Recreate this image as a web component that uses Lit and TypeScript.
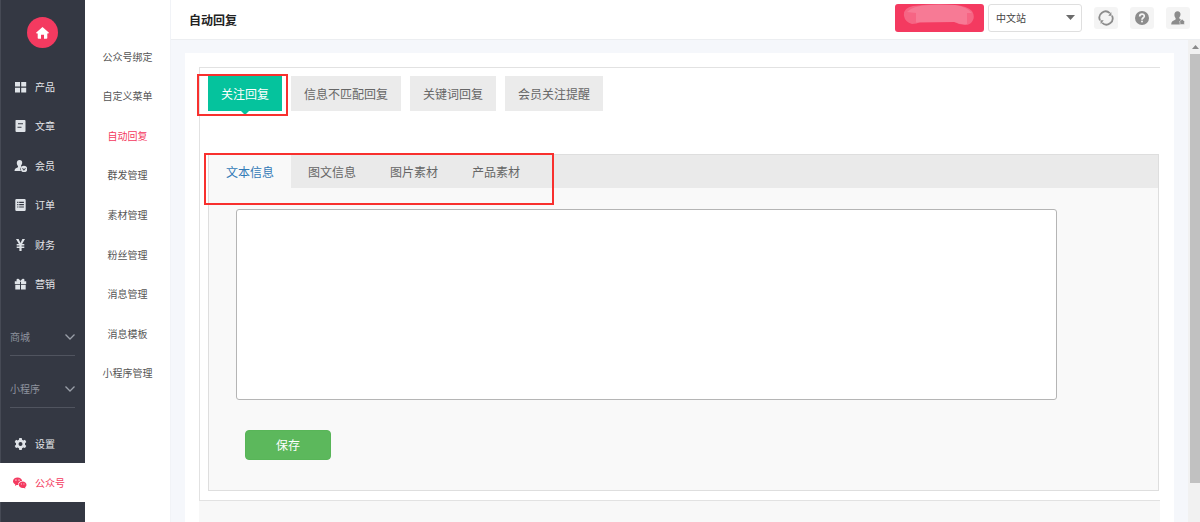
import { LitElement, html, svg, css, TemplateResult } from "lit";
import { customElement, state } from "lit/decorators.js";
import { classMap } from "lit/directives/class-map.js";

const icons: Record<string, TemplateResult> = {
  grid: svg`<path d="M0.5 1h5v4.6h-5zM6.7 1h5v4.6h-5zM0.5 6.8h5v4.6h-5zM6.7 6.8h5v4.6h-5z"/>`,
  article: svg`<path fill-rule="evenodd" d="M1.5 0h8.5q1 0 1 1v10q0 1-1 1H2q-1 0-1-1V.5q0-.5.5-.5zM3.5 3.3v1h5v-1zM3 6.7v1h4v-1z"/>`,
  member: svg`<path d="M5 0c1.800 0 2.900 1.300 2.700 3.100C7.600 4.200 7 5 6.500 5.700c0 .5.300.9.700 1.100A3 3 0 0 0 6.500 11H0c0-2.500 1.600-3 3-3.600.6-.3.700-1 .4-1.500C2.700 5.200 2.300 4 2.300 3 2.300 1.200 3.400 0 5 0z"/><path fill-rule="evenodd" d="M9.500 5.800a3.200 3.200 0 1 1 0 6.400 3.200 3.200 0 0 1 0-6.400zM7.700 8.400l1.700 2.400 1.900-2.400-.7-.4-1.200 1.400-.9-1.400z"/>`,
  order: svg`<path fill-rule="evenodd" d="M2 0h8q1.200 0 1.200 1.200v9.600Q11.200 12 10 12H2Q.8 12 .8 10.800V1.200Q.8 0 2 0zM2.700 2.800v1.100h1.200V2.800zM4.700 2.800v1.100h4.700V2.800zM2.700 5.100v1.100h1.200V5.100zM4.700 5.100v1.100h4.700V5.100zM2.700 7.400v1.100h1.200V7.400zM4.700 7.400v1.100h4.700V7.400z"/>`,
  yen: svg`<path d="M1.500 0h2.600L6 4 7.900 0h2.600L7.600 5h2.200v1.400H7.100v1.200h2.700V9H7.100v3H4.900V9H2.200V7.600h2.700V6.400H2.200V5h2.200z"/>`,
  gift: svg`<path d="M.3 3.200h2C1.300 1.500 2.500.3 3.800.8 4.800 1.200 5.500 2 6 3c.5-1 1.200-1.800 2.200-2.200 1.300-.5 2.500.7 1.500 2.400h2v2.700H6.500V3.700h-1v2.200H.3zM.8 6.700h4.700v4.800H.8zM6.500 6.700h4.700v4.800H6.500z"/>`,
  gear: svg`<path fill-rule="evenodd" d="M4.800 0h2.400l.4 1.700 1.200.7 1.700-.6 1.300 2.100-1.300 1.300v1.500L11.800 8l-1.300 2.100-1.700-.5-1.200.7-.4 1.700H4.800l-.4-1.700-1.200-.7-1.700.5L.2 8l1.300-1.300V5.200L.2 3.900l1.300-2.100 1.700.6 1.200-.7zM6 4a2 2 0 1 0 0 4 2 2 0 0 0 0-4z"/>`,
  wechat: svg`<path fill-rule="evenodd" d="M4.600.6c2.400 0 4.300 1.400 4.500 3.300C6.500 4 4.800 5.700 5.300 8L3.500 8 2 8.900l.3-1.500C.9 6.700 0 5.600 0 4.300 0 2.200 2 .6 4.600.6zM2.900 2.500a.6.600 0 1 0 .1 0zM6 2.500a.6.600 0 1 0 .1 0z"/><path fill-rule="evenodd" d="M9.600 4.600c2.100 0 3.900 1.400 3.900 3.200 0 1-.6 1.900-1.400 2.500l.3 1.300-1.500-.7c-2.900.5-5.100-1.100-5.100-3.100 0-1.800 1.700-3.200 3.800-3.200zM8.300 6.500a.5.500 0 1 0 .1 0zM10.900 6.500a.5.500 0 1 0 .1 0z"/>`,
};

const icon = (name: string) =>
  html`<svg class="icon" viewBox=${name === "wechat" ? "0 0 14 12" : "0 0 12 12"} aria-hidden="true">${icons[name]}</svg>`;

@customElement("app-root")
export class AppRoot extends LitElement {
  @state() private replyTab = 0;
  @state() private materialTab = 0;

  private nav = [
    ["grid", "产品"],
    ["article", "文章"],
    ["member", "会员"],
    ["order", "订单"],
    ["yen", "财务"],
    ["gift", "营销"],
  ];
  private groups = ["商城", "小程序"];
  private sub = ["公众号绑定", "自定义菜单", "自动回复", "群发管理", "素材管理", "粉丝管理", "消息管理", "消息模板", "小程序管理"];
  private replies = ["关注回复", "信息不匹配回复", "关键词回复", "会员关注提醒"];
  private materials = ["文本信息", "图文信息", "图片素材", "产品素材"];

  static styles = css`
    :host {
      display: flex;
      height: 100vh;
      overflow: hidden;
      background: #fff;
      color: #555;
      font: 12px/16px "Noto Sans CJK SC", sans-serif;
    }
    * { box-sizing: border-box; }
    a { color: inherit; text-decoration: none; }
    button, select, textarea { font: inherit; margin: 0; }
    ul { list-style: none; margin: 0; padding: 0; }
    h1 { margin: 0; align-self: center; font-size: 12px; color: #222; }

    .side {
      flex: none;
      width: 85px;
      background: #343843;
      color: #e4e6e9;
      font-size: 10px;
      box-shadow: inset 1px 0 #464a55;
      display: flex;
      flex-direction: column;
    }
    .home {
      display: grid;
      place-items: center;
      align-self: center;
      width: 31px;
      height: 31px;
      margin: 17px 0 19px;
      border-radius: 50%;
      background: #f43a60;
    }
    .home svg { width: 13px; height: 12px; fill: #fff; }
    .nav { display: grid; grid-auto-rows: 1fr; height: 237px; }
    .item { display: flex; align-items: center; gap: 8px; height: 100%; padding-left: 14px; }
    .icon { width: 13px; height: 12px; fill: #dfe3e8; flex: none; }
    .group {
      display: flex;
      align-items: center;
      justify-content: space-between;
      width: 65px;
      height: 52px;
      margin-left: 10px;
      padding: 14px 0 0;
      border: 0;
      border-bottom: 1px solid #50545f;
      background: none;
      color: #8f949f;
    }
    .group svg { width: 10px; height: 6px; fill: none; stroke: #9a9fa9; stroke-width: 1.3; }
    .tail { display: grid; grid-auto-rows: 39px; margin-top: 16px; }
    .current { background: #fff; color: #f43a60; padding-left: 13px; }
    .current .icon { width: 14px; fill: #f43a60; }

    .sub {
      flex: none;
      display: grid;
      grid-auto-rows: 1fr;
      width: 85px;
      height: 356px;
      margin-top: 37px;
      font-size: 10px;
    }
    .sub a { display: grid; place-items: center; height: 100%; }
    .sub .on { color: #f43a60; }

    .main { flex: 1; min-width: 0; display: flex; flex-direction: column; border-left: 1px solid #f1f3f7; }
    .top {
      flex: none;
      display: flex;
      height: 40px;
      padding: 0 10px 0 18px;
      border-bottom: 1px solid #eceef1;
    }
    .tools { margin-left: auto; display: flex; align-items: center; gap: 12px; height: 36px; }
    .pair { display: flex; gap: 4px; }
    .account { width: 89px; height: 28px; padding: 0; border: 0; border-radius: 3px; background: #f43a60; display: block; }
    .account svg { display: block; width: 89px; height: 28px; }
    .site { position: relative; }
    .site select {
      display: block;
      width: 94px;
      height: 28px;
      padding: 0 7px;
      border: 1px solid #dfdfdf;
      border-radius: 3px;
      background: #fff;
      color: #444;
      font-size: 10px;
      appearance: none;
    }
    .site svg { position: absolute; right: 7px; top: 11px; width: 9px; height: 5px; fill: #6b6b6b; pointer-events: none; }
    .tool { display: grid; place-items: center; width: 24px; height: 22px; padding: 0; border: 0; border-radius: 3px; background: #f4f4f4; }
    .tool svg { width: 16px; height: 16px; fill: #8c8c8c; }

    .view { flex: 1; min-height: 0; display: flex; background: #f5f7fb; }
    .card { flex: 1; min-width: 0; margin: 13px 14px 0; padding: 14px 14px 0; background: #fff; display: flex; flex-direction: column; }
    .panel {
      flex: none;
      padding: 8px 1px 9px 8px;
      border: 1px solid #e2e2e2;
      border-right: 0;
    }
    .foot { flex: 1; background: #f8f8f8; }
    .replies { display: flex; gap: 9px; }
    .reply { height: 35px; padding: 0 13px; border: 0; background: #ebebeb; color: #666; position: relative; }
    .reply.on { background: #05c39d; color: #fff; }
    .reply.on::after {
      content: "";
      position: absolute;
      left: 50%;
      top: 100%;
      margin-left: -4px;
      border: 4px solid transparent;
      border-top-color: #05c39d;
      border-bottom: 0;
    }
    .box { margin-top: 43px; border: 1px solid #dedede; background: #f9f9f9; }
    .materials { display: flex; background: #eaeaea; }
    .material { height: 33px; padding: 0 17px; border: 0; background: none; color: #666; }
    .material.on { background: #f9f9f9; color: #337ab7; }
    .form { padding: 21px 27px 30px; }
    .form textarea {
      display: block;
      width: 100%;
      max-width: 821px;
      height: 191px;
      padding: 8px;
      border: 1px solid #b5b5b5;
      border-radius: 3px;
      background: #fff;
      resize: none;
    }
    .save {
      display: block;
      width: 86px;
      height: 30px;
      margin: 30px 0 0 9px;
      padding: 0;
      border: 1px solid #58b558;
      border-radius: 4px;
      background: #5cb85c;
      color: #fff;
    }
    .mark { position: absolute; border: 2px solid #f8302e; pointer-events: none; z-index: 1; }
    .marked { position: relative; }
    .mark-reply { left: -11px; top: -2px; width: 91px; height: 42px; }
    .mark-material { left: -5px; top: -2px; width: 350px; height: 52px; }

    .bar { flex: none; width: 12px; padding-left: 2px; background: #f1f1f1; display: flex; flex-direction: column; }
    .bar svg { display: block; width: 10px; height: 14px; fill: #8a8a8a; }
    .thumb { height: 89%; background: #c1c1c1; }
  `;

  render() {
    return html`
      <nav class="side" aria-label="主菜单">
        <a class="home" href="#" aria-label="首页">
          <svg viewBox="0 0 13 12"><path d="M6.500 0L13 5.700l-.7.800h-1V11q0 .8-.8.800H8V7.800H5v4H2.500q-.8 0-.8-.8V6.500h-1L0 5.700z" /></svg>
        </a>
        <ul class="nav">
          ${this.nav.map(([name, label]) => html`<li><a class="item" href="#">${icon(name)}${label}</a></li>`)}
        </ul>
        ${this.groups.map(
          (g) => html`<button class="group">${g}<svg viewBox="0 0 10 6" aria-hidden="true"><path d="M.5.500L5 5 9.500.500" /></svg></button>`
        )}
        <ul class="tail">
          <li><a class="item" href="#">${icon("gear")}设置</a></li>
          <li><a class="item current" href="#">${icon("wechat")}公众号</a></li>
        </ul>
      </nav>

      <ul class="sub">
        ${this.sub.map((s) => html`<li><a class=${classMap({ on: s === "自动回复" })} href="#">${s}</a></li>`)}
      </ul>

      <main class="main">
        <header class="top">
          <h1>自动回复</h1>
          <div class="tools">
            <div class="pair">
              <button class="account" aria-label="账号">
                <svg viewBox="0 0 89 28">
                  <path fill="#f66584" d="M18 2q22-3 42-1 12 1 17 6 3 5 1 9-2 5-8 5-5 0-11-3H25q-3 2-8 2-7-2-8-8-1-8 9-10z" />
                  <path fill="#f77a95" d="M12 8q5-6 22-7h26q12 2 17 8h-5v11q-6 1-12-2l-39 .5V9z" />
                </svg>
              </button>
              <label class="site">
                <select aria-label="站点"><option>中文站</option></select>
                <svg viewBox="0 0 9 5" aria-hidden="true"><path d="M0 0h9L4.500 5z" /></svg>
              </label>
            </div>
            <button class="tool" aria-label="刷新">
              <svg viewBox="0 0 16 16">
                <g fill="none" stroke="#8c8c8c" stroke-width="1.800">
                  <path d="M2 10.300A6.200 6.200 0 0 1 11.800 3.100" /><path d="M14 5.700A6.200 6.200 0 0 1 4.200 12.900" />
                </g>
                <path d="M10.300 5.800l3.300-.1-.4-3.600zM5.700 10.200l-3.300.1.400 3.600z" />
              </svg>
            </button>
            <button class="tool" aria-label="帮助">
              <svg viewBox="0 0 16 16">
                <circle cx="8" cy="8" r="7" />
                <path fill="none" stroke="#f4f4f4" stroke-width="1.700" d="M5.700 6.400C5.700 3.300 10.400 3.400 10.300 6.200 10.200 7.800 8 7.700 8 9.700" />
                <circle cx="8" cy="11.600" r="1" fill="#f4f4f4" />
              </svg>
            </button>
            <button class="tool" aria-label="用户">
              <svg viewBox="0 0 16 16">
                <path d="M7.500 1.200c2 0 3.200 1.500 3 3.400-.1 1.300-.7 2.200-1.300 3 0 .8.300 1.300 1 1.600l1.800 1-1.500 4.300H1.200c0-3 1.400-3.700 3.500-4.600 1-.4 1.200-1.200.8-2-.7-.8-1.100-2-1.100-3.200 0-2 1.200-3.500 3.100-3.500z" />
                <path d="M12.200 9l2.800 2.900-.6.400v2.300H10v-2.300l-.6-.4z" stroke="#f4f4f4" stroke-width=".6" />
              </svg>
            </button>
          </div>
        </header>

        <div class="view">
          <section class="card">
            <div class="panel">
              <div class="marked">
                <div class="replies" role="tablist">
                  ${this.replies.map(
                    (t, i) => html`<button role="tab" aria-selected=${i === this.replyTab}
                      class=${classMap({ reply: true, on: i === this.replyTab })}
                      @click=${() => (this.replyTab = i)}>${t}</button>`
                  )}
                </div>
                <div class="mark mark-reply"></div>
              </div>
              <div class="box marked">
                <div class="materials" role="tablist">
                  ${this.materials.map(
                    (t, i) => html`<button role="tab" aria-selected=${i === this.materialTab}
                      class=${classMap({ material: true, on: i === this.materialTab })}
                      @click=${() => (this.materialTab = i)}>${t}</button>`
                  )}
                </div>
                <form class="form" @submit=${(e: Event) => e.preventDefault()}>
                  <textarea aria-label="文本信息"></textarea>
                  <button class="save">保存</button>
                </form>
                <div class="mark mark-material"></div>
              </div>
            </div>
            <div class="foot"></div>
          </section>
          <div class="bar" aria-hidden="true">
            <svg viewBox="0 0 10 14"><path d="M2 9h7L5.500 5z" /></svg>
            <div class="thumb"></div>
          </div>
        </div>
      </main>
    `;
  }
}
